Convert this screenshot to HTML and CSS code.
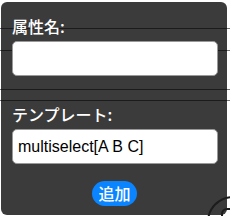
FILE: index.html
```html
<!DOCTYPE html>
<html lang="ja">
<head>
    <meta charset="UTF-8">
    <meta name="viewport" content="width=device-width, initial-scale=1.0">
    <title>属性の追加</title>
    <link rel="stylesheet" href="styles.css">
</head>
<body>
    <!-- page rows behind the dialog -->
    <div class="rows">
        <div class="row r1"></div>
        <div class="row r2"></div>
        <div class="row r3"></div>
        <div class="row r4"></div>
    </div>

    <!-- Add attribute dialog -->
    <div class="dialog">
        <label for="attrName">属性名:</label>
        <input type="text" id="attrName">
        <div class="sep"></div>
        <label for="template">テンプレート:</label>
        <input type="text" id="template" value="multiselect[A B C]">
        <div class="actions">
            <button>追加</button>
        </div>
    </div>

    <!-- corner of the help button, cut off by the window -->
    <svg class="help-ring" width="23" height="20" viewBox="0 0 23 20">
        <circle cx="26" cy="26" r="25" fill="none" stroke="#1c1c1c" stroke-width="2"/>
        <rect x="15" y="13" width="18" height="18" rx="5" fill="none" stroke="#1c1c1c" stroke-width="2"/>
    </svg>
</body>
</html>
```

FILE: styles.css
```css
* {
    margin: 0;
    padding: 0;
    box-sizing: border-box;
}

body {
    background: #fff;
    font-family: 'Liberation Sans', Arial, 'Noto Sans CJK JP', sans-serif;
    width: 230px;
    height: 216px;
    overflow: hidden;
    position: relative;
}

.row {
    border-bottom: 1px solid #777;
}

.r1 { height: 29px; }
.r2 { height: 22px; }
.r3 { height: 39px; }
.r4 { height: 11px; }

.dialog {
    position: absolute;
    left: 1px;
    top: 2px;
    width: 226px;
    height: 213px;
    background: rgba(0, 0, 0, 0.77);
    border-radius: 6px;
    padding: 14px 10px 0 11px;
}

label {
    display: block;
    color: #fff;
    font-family: 'Noto Sans CJK JP', sans-serif;
    font-size: 16px;
    font-weight: 500;
    line-height: 20px;
    height: 24px;
}

input[type="text"] {
    display: block;
    width: 206px;
    height: 35px;
    border: 1px solid #999;
    border-radius: 5px;
    background: #fff;
    padding: 0 5px;
    font-family: 'Liberation Sans', Arial, sans-serif;
    font-size: 16px;
    color: #000;
    margin-top: 1px;
}

.sep {
    height: 28px;
}

.actions {
    display: flex;
    justify-content: center;
    padding-top: 17px;
}

button {
    background: #0a84ff;
    color: #fff;
    border: none;
    border-radius: 13px;
    height: 25px;
    padding: 0 6px;
    font-family: 'Noto Sans CJK JP', sans-serif;
    font-size: 16px;
    font-weight: 500;
    line-height: 25px;
    cursor: pointer;
}

.help-ring {
    position: absolute;
    left: 207px;
    top: 196px;
}
```
